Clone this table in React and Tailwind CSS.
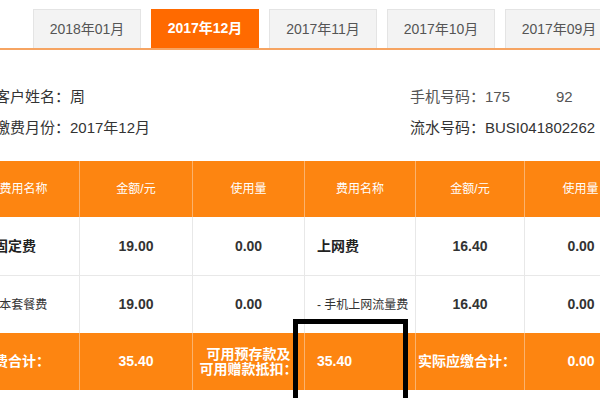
import React from "react";

const tabs = ["2018年01月", "2017年12月", "2017年11月", "2017年10月", "2017年09月"];

const cols = "grid grid-cols-[112px_113px_112px_111px_109px_112px]";

export default function App() {
  return (
    <div className="relative w-[600px] h-[398px] overflow-hidden bg-white font-['Liberation_Sans','Noto_Sans_CJK_SC',sans-serif] text-[#333]">
      {/* month tabs */}
      <div className="flex gap-[10px] pl-[33px] pt-[9px] border-b-2 border-[#f6a462]">
        {tabs.map((t, i) => (
          <div
            key={t}
            className={
              i === 1
                ? "w-[108px] h-[39px] shrink-0 flex items-center justify-center bg-[#ff6a00] text-white font-bold text-[14px]"
                : "w-[108px] h-[39px] shrink-0 flex items-center justify-center bg-[#f3f3f3] border border-b-0 border-[#e4e4e4] text-[#555] text-[14px]"
            }
          >
            {t}
          </div>
        ))}
      </div>

      {/* customer info */}
      <div className="flex pt-[31px] text-[15px]">
        <div className="w-[415px] shrink-0 ml-[-5px]">
          <div className="h-[31px] leading-[31px]">客户姓名：周</div>
          <div className="h-[31px] leading-[31px]">缴费月份：2017年12月</div>
        </div>
        <div className="whitespace-nowrap">
          <div className="h-[31px] leading-[31px] text-[#555]">
            手机号码：175<span className="inline-block w-[46px]"></span>92
          </div>
          <div className="h-[31px] leading-[31px]">流水号码：BUSI041802262</div>
        </div>
      </div>

      {/* bill table */}
      <div className="mt-[18px] ml-[-32px] w-[669px]">
        <div className={`${cols} h-[56px] bg-[#fd8511] text-white text-[12px]`}>
          {["费用名称", "金额/元", "使用量", "费用名称", "金额/元", "使用量"].map((h, i) => (
            <div key={i} className="flex items-center justify-center border-r border-[#fbb26c]">
              {h}
            </div>
          ))}
        </div>

        <div className={`${cols} h-[59px] border-b border-[#e8e8e8]`}>
          <div className="flex items-center pl-3 font-bold text-[14px] text-[#222] border-r border-[#e8e8e8]">月固定费</div>
          <div className="flex items-center justify-center font-bold text-[14px] border-r border-[#e8e8e8]">19.00</div>
          <div className="flex items-center justify-center font-bold text-[14px] border-r border-[#e8e8e8]">0.00</div>
          <div className="flex items-center pl-3 font-bold text-[14px] text-[#222] border-r border-[#e8e8e8]">上网费</div>
          <div className="flex items-center justify-center font-bold text-[14px] border-r border-[#e8e8e8]">16.40</div>
          <div className="flex items-center justify-center font-bold text-[14px]">0.00</div>
        </div>

        <div className={`${cols} h-[57px]`}>
          <div className="flex items-center pl-3 text-[12px] border-r border-[#e8e8e8]">- 基本套餐费</div>
          <div className="flex items-center justify-center font-bold text-[14px] border-r border-[#e8e8e8]">19.00</div>
          <div className="flex items-center justify-center font-bold text-[14px] border-r border-[#e8e8e8]">0.00</div>
          <div className="flex items-center pl-3 text-[12px] border-r border-[#e8e8e8]">- 手机上网流量费</div>
          <div className="flex items-center justify-center font-bold text-[14px] border-r border-[#e8e8e8]">16.40</div>
          <div className="flex items-center justify-center font-bold text-[14px]">0.00</div>
        </div>

        <div className={`${cols} h-[57px] bg-[#fd8511] text-white font-bold text-[14px]`}>
          <div className="flex items-center pl-3 border-r border-[#fbb26c]">消费合计：</div>
          <div className="flex items-center justify-center border-r border-[#fbb26c]">35.40</div>
          <div className="flex items-center justify-center text-center leading-[15px] border-r border-[#fbb26c]">
            可用预存款及
            <br />
            可用赠款抵扣：
          </div>
          <div className="flex items-center pl-3 border-r border-[#fbb26c]">35.40</div>
          <div className="flex items-center pl-[2px] border-r border-[#fbb26c]">实际应缴合计：</div>
          <div className="flex items-center justify-center">0.00</div>
        </div>
      </div>

      {/* highlight box drawn over the screenshot */}
      <div className="absolute left-[293px] top-[319px] w-[115px] h-[100px] border-[5px] border-black"></div>
    </div>
  );
}
